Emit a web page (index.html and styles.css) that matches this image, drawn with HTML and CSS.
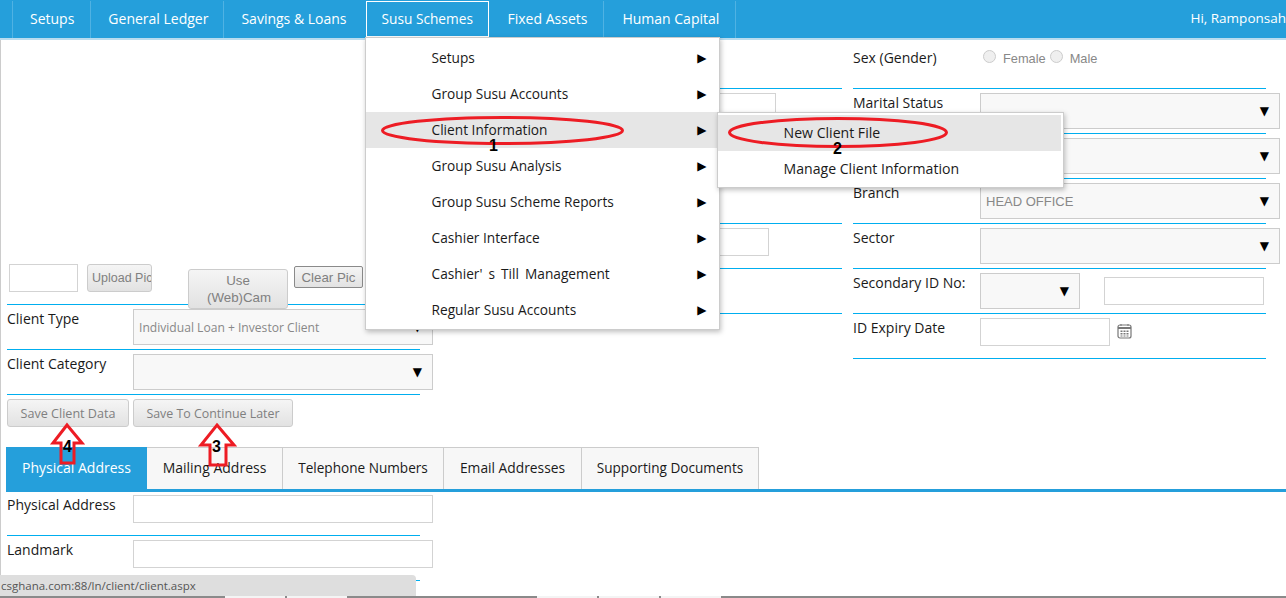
FILE: index.html
```html
<!DOCTYPE html>
<html>
<head>
    <meta charset="UTF-8">
    <title>Client Information</title>
    <link rel="stylesheet" href="styles.css">
</head>
<body>
    <header class="topbar">
        <nav class="nav">
            <a class="nav-item">Setups</a>
            <a class="nav-item">General Ledger</a>
            <a class="nav-item">Savings &amp; Loans</a>
            <div class="nav-item active">Susu Schemes
                <ul class="menu">
                    <li><span>Setups</span><i>▶</i></li>
                    <li><span>Group Susu Accounts</span><i>▶</i></li>
                    <li class="hover"><span>Client Information</span><i>▶</i>
                        <ul class="submenu">
                            <li class="hover"><span>New Client File</span></li>
                            <li><span>Manage Client Information</span></li>
                        </ul>
                    </li>
                    <li><span>Group Susu Analysis</span><i>▶</i></li>
                    <li><span>Group Susu Scheme Reports</span><i>▶</i></li>
                    <li><span>Cashier Interface</span><i>▶</i></li>
                    <li><span class="wide">Cashier' s Till Management</span><i>▶</i></li>
                    <li><span>Regular Susu Accounts</span><i>▶</i></li>
                </ul>
            </div>
            <a class="nav-item">Fixed Assets</a>
            <a class="nav-item">Human Capital</a>
        </nav>
        <div class="greeting">Hi, Ramponsah</div>
    </header>

    <main class="page">
        <div class="columns">
            <section class="col col-left">
                <div class="pic-row">
                    <div class="input pic-file"></div>
                    <button class="btn btn-upload">Upload Pic</button>
                    <button class="btn btn-cam">Use (Web)Cam</button>
                    <button class="btn btn-clear">Clear Pic</button>
                </div>
                <div class="row">
                    <label>Client Type</label>
                    <div class="select muted-small">Individual Loan + Investor Client<i>▼</i></div>
                </div>
                <div class="row">
                    <label>Client Category</label>
                    <div class="select"><i>▼</i></div>
                </div>
                <div class="actions">
                    <button class="btn btn-save">Save Client Data</button>
                    <button class="btn btn-later">Save To Continue Later</button>
                </div>
            </section>

            <section class="col col-mid">
                <div class="row"></div>
                <div class="row"><div class="input input-a"></div></div>
                <div class="row"></div>
                <div class="row"></div>
                <div class="row"><div class="input input-b"></div></div>
                <div class="row"></div>
            </section>

            <section class="col col-right">
                <div class="row">
                    <label>Sex (Gender)</label>
                    <div class="radios">
                        <b class="radio"></b><span>Female</span>
                        <b class="radio"></b><span>Male</span>
                    </div>
                </div>
                <div class="row"><label>Marital Status</label><div class="select"><i>▼</i></div></div>
                <div class="row"><label></label><div class="select"><i>▼</i></div></div>
                <div class="row"><label>Branch</label><div class="select muted">HEAD OFFICE<i>▼</i></div></div>
                <div class="row"><label>Sector</label><div class="select"><i>▼</i></div></div>
                <div class="row">
                    <label>Secondary ID No:</label>
                    <div class="select select-short"><i>▼</i></div>
                    <div class="input input-id"></div>
                </div>
                <div class="row row-last">
                    <label>ID Expiry Date</label>
                    <div class="input input-date"></div>
                    <svg class="calendar" width="15" height="16" viewBox="0 0 15 16">
                        <rect x="1" y="2" width="13" height="13" rx="2" fill="none" stroke="#777" stroke-width="1.2"/>
                        <path d="M1 5h13" stroke="#777" stroke-width="2"/>
                        <path d="M4 1v2M11 1v2" stroke="#777"/>
                        <path d="M3.5 7.5h2v1.500h-2zM6.500 7.500h2v1.500h-2zM9.500 7.500h2v1.500h-2zM3.500 10h2v1.500h-2zM6.500 10h2v1.500h-2zM9.500 10h2v1.500h-2zM3.500 12.500h2v1h-2zM6.500 12.500h2v1h-2zM9.500 12.500h2v1h-2z" fill="#777"/>
                    </svg>
                </div>
            </section>
        </div>

        <div class="tabs">
            <a class="tab active">Physical Address</a>
            <a class="tab tab-mail">Mailing Address</a>
            <a class="tab tab-phone">Telephone Numbers</a>
            <a class="tab tab-email">Email Addresses</a>
            <a class="tab tab-docs">Supporting Documents</a>
        </div>
        <section class="col col-left tab-body">
            <div class="row"><label>Physical Address</label><div class="input input-wide"></div></div>
            <div class="row"><label>Landmark</label><div class="input input-wide"></div></div>
        </section>
    </main>

    <div class="status">csghana.com:88/ln/client/client.aspx</div>
    <div class="cutoff">
        <b></b><b></b><em></em><b></b><b></b><b></b>
    </div>

    <!-- markup drawn on top of the screenshot -->
    <svg class="notes" width="1286" height="598" viewBox="0 0 1286 598">
        <g fill="none" stroke="#ed1c24" stroke-width="3">
            <ellipse cx="502.500" cy="130.500" rx="120" ry="13"/>
            <ellipse cx="838" cy="132.500" rx="108.500" ry="14"/>
            <path d="M67 425L82 443H74V463H61V443H53Z"/>
            <path d="M217 425L234 445H226V465H210V445H201Z"/>
        </g>
    </svg>
    <span class="num n1">1</span>
    <span class="num n2">2</span>
    <span class="num n3">3</span>
    <span class="num n4">4</span>
</body>
</html>
```

FILE: styles.css
```css
* {
    box-sizing: border-box;
}

html, body {
    height: 598px;
    overflow: hidden;
}

body {
    margin: 0;
    position: relative;
    background: #fff;
    color: #1a1a1a;
    font-family: "Open Sans", "Liberation Sans", sans-serif;
    font-size: 14px;
}

/* top bar */
.topbar {
    display: flex;
    justify-content: space-between;
    height: 40px;
    background: #259fdb;
    border-bottom: 2px solid #b9dcef;
    color: #fff;
}

.nav {
    display: flex;
    padding-left: 12px;
    height: 37px;
    margin-top: 1px;
}

.nav-item {
    position: relative;
    padding: 0 16px 0 17px;
    line-height: 36px;
    border-left: 1px solid #4fb2e3;
    white-space: nowrap;
}

.nav-item:nth-child(2) {
    padding-right: 15px;
}

.nav-item:nth-child(3) {
    padding-right: 19px;
}

.nav-item.active {
    width: 123px;
    height: 37px;
    padding: 0 15px;
    border: 1px solid #fff;
    border-bottom-width: 2px;
    font-size: 13.700px;
    line-height: 34px;
    z-index: 5;
}

.nav-item.active + .nav-item {
    border-left: 0;
    padding: 0 16px 0 19px;
}

.nav-item:last-child {
    padding: 0 16px 0 18px;
    border-right: 1px solid #4fb2e3;
}

.greeting {
    font-size: 13.500px;
    line-height: 36px;
    white-space: nowrap;
}

/* dropdown menus */
.menu, .submenu {
    position: absolute;
    margin: 0;
    padding: 2px 2px 2px 0;
    list-style: none;
    background: #fff;
    border: 1px solid #ccc;
    box-shadow: 1px 2px 5px rgba(0, 0, 0, 0.25);
    color: #1a1a1a;
    font-size: 13.700px;
}

.menu {
    top: 35px;
    left: -2px;
    width: 355px;
    height: 293px;
}

.submenu {
    top: 0;
    left: 351px;
    width: 347px;
    height: 76px;
    font-size: 14.100px;
}

.menu li {
    position: relative;
    display: flex;
    align-items: center;
    justify-content: space-between;
    height: 36px;
    padding: 0 10px 0 66px;
    line-height: 36px;
}

.menu li.hover {
    background: #e6e6e6;
}

.submenu li {
    background: #fff;
}

.menu li i {
    font-style: normal;
    font-size: 12px;
    color: #000;
    font-family: "DejaVu Sans", sans-serif;
}

.wide {
    word-spacing: 2.500px;
}

/* form columns */
.page {
    border-left: 1px solid #ccc;
    height: 556px;
}

.columns {
    display: flex;
    height: 387px;
}

.col {
    width: 413px;
}

.col-left {
    margin-left: 6px;
    padding-top: 224px;
}

.col-mid {
    margin-left: 9px;
    padding-top: 4px;
}

.col-right {
    margin-left: 11px;
    padding-top: 4px;
}

.row {
    display: flex;
    height: 45px;
    padding-top: 4px;
    border-bottom: 1px solid #00aeef;
}

.row label {
    width: 127px;
    flex: none;
    padding-top: 1px;
    line-height: 18px;
}

.col-left .row label {
    width: 126px;
}

.row-last {
    height: 45px;
}

.input {
    height: 28px;
    background: #fff;
    border: 1px solid #d3d3d3;
}

.select {
    position: relative;
    flex: none;
    display: flex;
    align-items: center;
    width: 300px;
    height: 36px;
    padding-left: 5px;
    background: #f8f8f8;
    border: 1px solid #ccc;
    color: #888;
    font-size: 12.100px;
    z-index: 1;
}

.select.muted {
    font-family: "Liberation Sans", sans-serif;
    font-size: 13px;
}

.select i {
    position: absolute;
    right: 10px;
    top: 9px;
    font-style: normal;
    font-size: 12px;
    line-height: 16px;
    color: #000;
    font-family: "DejaVu Sans", sans-serif;
}

.select-short {
    width: 100px;
}

.input-id {
    width: 160px;
    margin: 4px 0 0 24px;
}

.input-date {
    width: 130px;
}

.input-wide {
    width: 300px;
    flex: none;
    margin-top: 1px;
}

.input-a {
    width: 220px;
    margin-left: 127px;
}

.input-b {
    width: 213px;
    margin-left: 127px;
}

.calendar {
    margin: 5px 0 0 7px;
}

.radios {
    display: flex;
    align-items: flex-start;
    color: #888;
    font-family: "Liberation Sans", sans-serif;
    font-size: 12.800px;
    padding-top: 2px;
}

.radio {
    width: 13px;
    height: 13px;
    margin: 0 7px 0 3px;
    border: 1px solid #ccc;
    border-radius: 50%;
    background: #efefef;
}

.radios span {
    margin: 1px 1px 0 0;
}

/* picture row */
.pic-row {
    display: flex;
    align-items: flex-start;
    height: 41px;
    border-bottom: 1px solid #00aeef;
    padding-left: 2px;
}

.btn {
    display: block;
    padding: 0;
    background: linear-gradient(#f5f5f5, #e2e2e2);
    border: 1px solid #ccc;
    border-radius: 3px;
    color: #808080;
    font-family: "Liberation Sans", sans-serif;
    font-size: 13.300px;
    line-height: 17px;
}

.pic-file {
    width: 69px;
}

.btn-upload {
    width: 65px;
    height: 28px;
    margin-left: 9px;
    padding-left: 4px;
    font-size: 12.500px;
    text-align: left;
    white-space: nowrap;
    overflow: hidden;
}

.btn-cam {
    position: relative;
    width: 100px;
    height: 40px;
    margin: 5px 0 0 36px;
    padding: 0 18px;
}

.btn-clear {
    width: 69px;
    height: 22px;
    margin: 2px 0 0 6px;
    border-color: #8a8a8a;
    border-radius: 2px;
}

.actions {
    display: flex;
    gap: 4px;
    padding-top: 4px;
}

.btn-save, .btn-later {
    height: 28px;
    padding-top: 1px;
    font-family: "Open Sans", sans-serif;
    font-size: 12.600px;
}

.btn-save {
    width: 122px;
}

.btn-later {
    width: 160px;
    font-size: 12.400px;
}

/* tabs */
.tabs {
    display: flex;
    height: 45px;
    margin: 20px 0 0 5px;
    border-bottom: 3px solid #259fdb;
}

.tab {
    height: 42px;
    line-height: 40px;
    background: #f7f7f7;
    border-top: 1px solid #ccc;
    border-right: 1px solid #ccc;
    font-size: 13.600px;
    text-align: center;
    white-space: nowrap;
}

.tab.active {
    width: 141px;
    background: #259fdb;
    border: 0;
    color: #fff;
    font-size: 14px;
    line-height: 42px;
}

.tab-mail { width: 136px; font-size: 14px; }
.tab-phone { width: 161px; }
.tab-email { width: 138px; font-size: 13.800px; }
.tab-docs { width: 177px; }

.tab-body {
    padding-top: 0;
}

.tab-body .row {
    height: 44px;
    padding-top: 2px;
}

.tab-body .row + .row {
    height: 45px;
    padding-top: 3px;
}

.tab-body .row label {
    padding-top: 2px;
}

/* browser status bubble */
.status {
    position: absolute;
    left: 0;
    bottom: 2px;
    width: 416px;
    height: 21px;
    padding-left: 1px;
    background: #dedede;
    border-top-right-radius: 4px;
    color: #555;
    font-size: 11.500px;
    line-height: 21px;
    z-index: 20;
}

/* sliver of the next row cut by the window edge */
.cutoff {
    display: flex;
    height: 2px;
    padding-left: 225px;
    background: #8a8a8a;
}

.cutoff b {
    width: 60px;
    margin-right: 2px;
    background: #f4f4f4;
}

.cutoff em {
    width: 188px;
}

/* annotations */
.notes {
    position: absolute;
    left: 0;
    top: 0;
    z-index: 30;
    pointer-events: none;
}

.num {
    position: absolute;
    z-index: 31;
    color: #000;
    font-family: "Liberation Sans", sans-serif;
    font-size: 16px;
    font-weight: bold;
    line-height: 16px;
}

.n1 { left: 489px; top: 138px; }
.n2 { left: 833px; top: 141px; }
.n3 { left: 212px; top: 439px; }
.n4 { left: 63px; top: 439px; }
```
